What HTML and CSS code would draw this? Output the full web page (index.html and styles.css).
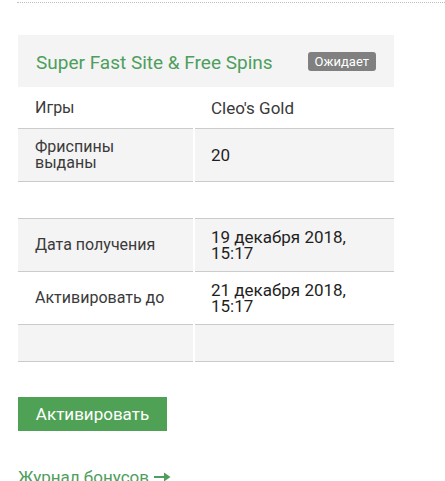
FILE: index.html
```html
<!DOCTYPE html>
<html lang="ru">
<head>
<meta charset="utf-8">
<link rel="stylesheet" href="styles.css">
</head>
<body>
<div class="page">
  <div class="rule"></div>
  <div class="card">
    <div class="card-head">
      <h2 class="title">Super Fast Site &amp; Free Spins</h2>
      <span class="badge">Ожидает</span>
    </div>
    <div class="grid">
      <div class="cell label row-a">Игры</div>
      <div class="cell value light row-a">Cleo's Gold</div>

      <div class="cell label row-b tall">Фриспины<br>выданы</div>
      <div class="cell value row-b tall">20</div>

      <div class="cell row-a empty"></div>
      <div class="cell row-a empty"></div>

      <div class="cell label row-b tall">Дата получения</div>
      <div class="cell value row-b tall">19 декабря 2018,<br>15:17</div>

      <div class="cell label row-a tall">Активировать до</div>
      <div class="cell value row-a tall">21 декабря 2018,<br>15:17</div>

      <div class="cell row-b empty"></div>
      <div class="cell row-b empty"></div>
    </div>
    <button class="btn" type="button">Активировать</button>
    <a class="log-link" href="#">Журнал бонусов<svg class="arrow" width="17" height="10" viewBox="0 0 17 10" aria-hidden="true"><rect x="0" y="4" width="11" height="2" fill="currentColor"/><path d="M10 0.5 L16.5 5 L10 9.5 Z" fill="currentColor"/></svg></a>
  </div>
</div>
</body>
</html>
```

FILE: styles.css
```css
html, body {
  margin: 0;
  padding: 0;
  background: #ffffff;
}

body {
  font-family: Roboto, "Liberation Sans", Arial, sans-serif;
  color: #333333;
}

.page {
  padding: 2px 0 0 18px;
}

.rule {
  border-top: 1px dotted #bdbdbd;
  margin-left: -1px;
  margin-bottom: 32px;
}

.card {
  width: 376px;
}

.card-head {
  display: flex;
  align-items: center;
  justify-content: space-between;
  height: 52px;
  padding: 0 18px;
  background: #f4f4f4;
  box-sizing: border-box;
}

.title {
  margin: 0;
  font-size: 19px;
  font-weight: 400;
  color: #4e9e5d;
  line-height: 1;
  position: relative;
  top: 1px;
}

.badge {
  display: inline-block;
  background: #808080;
  color: #ffffff;
  font-size: 13px;
  line-height: 19px;
  height: 19px;
  padding: 0 7px;
  border-radius: 3px;
}

.grid {
  display: grid;
  grid-template-columns: 175px 199px;
  column-gap: 2px;
}

.cell {
  border-bottom: 1px solid #cbcbcb;
  line-height: 16px;
  display: flex;
  align-items: center;
  box-sizing: border-box;
}

.row-a { background: #ffffff; }
.row-b { background: #f4f4f4; }

.label {
  padding-left: 17px;
  color: #3a3a3a;
  font-size: 16px;
  height: 42px;
}

.value {
  padding-left: 16px;
  color: #1f1f1f;
  font-size: 17px;
  height: 42px;
}

.value.light {
  color: #3a3a3a;
}

.tall { height: 53px; }
.empty { height: 37px; }

.btn {
  display: block;
  margin-top: 35px;
  width: 149px;
  height: 34px;
  border: 0;
  background: #4fa155;
  color: #ffffff;
  font-family: Roboto, "Liberation Sans", Arial, sans-serif;
  font-size: 17px;
  padding: 0;
  cursor: pointer;
}

.log-link {
  display: inline-flex;
  align-items: center;
  gap: 5px;
  margin-top: 37px;
  color: #4e9e5d;
  font-size: 17px;
  text-decoration: none;
  line-height: 18px;
}

.arrow {
  display: block;
}
```
